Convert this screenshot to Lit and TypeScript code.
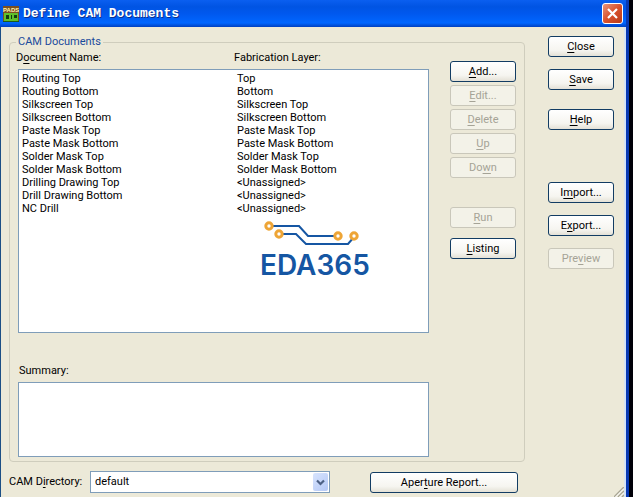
import { LitElement, html, css, svg } from "lit";
import { customElement, property } from "lit/decorators.js";

const documents: [string, string][] = [
  ["Routing Top", "Top"],
  ["Routing Bottom", "Bottom"],
  ["Silkscreen Top", "Silkscreen Top"],
  ["Silkscreen Bottom", "Silkscreen Bottom"],
  ["Paste Mask Top", "Paste Mask Top"],
  ["Paste Mask Bottom", "Paste Mask Bottom"],
  ["Solder Mask Top", "Solder Mask Top"],
  ["Solder Mask Bottom", "Solder Mask Bottom"],
  ["Drilling Drawing Top", "<Unassigned>"],
  ["Drill Drawing Bottom", "<Unassigned>"],
  ["NC Drill", "<Unassigned>"],
];

// Splits a caption such as "Do&wn" and underlines the letter after the ampersand.
const caption = (text: string) => {
  const at = text.indexOf("&");
  if (at < 0) return html`${text}`;
  return html`${text.slice(0, at)}<u>${text[at + 1]}</u>${text.slice(at + 2)}`;
};

@customElement("push-button")
export class PushButton extends LitElement {
  @property() label = "";
  @property({ type: Boolean }) disabled = false;

  static styles = css`
    :host {
      display: block;
    }
    .button {
      display: block;
      box-sizing: border-box;
      width: 100%;
      height: 21px;
      padding: 0;
      border: 1px solid #123c63;
      border-radius: 3px;
      background: linear-gradient(#ffffff, #f6f5f0 70%, #e4e1d6);
      color: #000;
      font: inherit;
      line-height: 19px;
      text-align: center;
      white-space: nowrap;
    }
    .button:disabled {
      border-color: #c9c7ba;
      background: #f3f2e8;
      color: #a5a396;
    }
    u {
      text-underline-offset: 2px;
      text-decoration-skip-ink: none;
    }
  `;

  render() {
    return html`<button class="button" type="button" ?disabled=${this.disabled}>${caption(this.label)}</button>`;
  }
}

@customElement("app-root")
export class AppRoot extends LitElement {
  static styles = css`
    :host {
      display: flex;
      box-sizing: border-box;
      min-height: 100vh;
      padding-right: 4px;
      background: #000008;
      color: #000;
      font: 11px/14px Roboto, "Liberation Sans", sans-serif;
    }
    .window {
      flex: 1;
      display: flex;
      flex-direction: column;
      border-right: 3px solid #0839b4;
      overflow: hidden;
    }
    .titlebar {
      display: flex;
      align-items: center;
      gap: 4px;
      box-sizing: border-box;
      height: 27px;
      padding: 0 3px;
      background: linear-gradient(#0a5ff0, #0054e3 25%, #0058ee 50%, #0066ff 85%, #0040c0);
    }
    .title {
      flex: 1;
      margin: 0;
      color: #fff;
      font: bold 13px/16px "Liberation Mono", monospace;
      text-shadow: 1px 1px #0b2f8c;
    }
    .close {
      width: 21px;
      height: 21px;
      padding: 0;
      border: 1px solid #fff;
      border-radius: 3px;
      background: linear-gradient(135deg, #e8957c, #d9512c 50%, #b93a17);
    }
    .close svg,
    .logo svg,
    .grip svg,
    .app-icon {
      display: block;
    }
    .close svg {
      margin: auto;
    }
    .body {
      position: relative;
      flex: 1;
      padding: 9px 10px 4px 8px;
      border-left: 1px solid #1c4f85;
      border-right: 2px solid #d5e3f5;
      background: #ece9d8;
    }
    .columns {
      display: flex;
      gap: 23px;
    }
    .group {
      flex: 1;
      display: flex;
      gap: 21px;
      min-width: 0;
      margin: 0;
      padding: 3px 8px 4px;
      border: 1px solid #cfcdbd;
      border-radius: 4px;
    }
    .legend {
      margin-left: -2px;
      padding: 0 2px;
      line-height: 12px;
      color: #1a4a9c;
    }
    .main {
      flex: 1;
      min-width: 0;
    }
    .headings {
      display: grid;
      grid-template-columns: 218px 1fr;
      margin: 0 -2px 4px;
    }
    .listbox {
      box-sizing: border-box;
      min-height: 264px;
      padding: 2px 3px;
      border: 1px solid #7f9db9;
      background: #fff;
    }
    .documents {
      width: 100%;
      border-collapse: collapse;
      table-layout: fixed;
    }
    .documents td {
      padding: 0;
      line-height: 13px;
    }
    .name {
      width: 215px;
    }
    .logo {
      width: 112px;
      margin: 6px 0 0 238px;
      color: #1556a3;
      font: 600 28px/32px Inter, sans-serif;
    }
    .summary-label {
      display: block;
      margin: 31px 0 4px 1px;
    }
    .summary {
      display: block;
      box-sizing: border-box;
      width: 100%;
      height: 75px;
      border: 1px solid #7f9db9;
      background: #fff;
      resize: none;
      font: inherit;
    }
    .actions {
      display: flex;
      flex-direction: column;
      gap: 3px;
      width: 66px;
      padding-top: 10px;
    }
    .actions .spaced {
      margin-top: 26px;
    }
    .actions .apart {
      margin-top: 7px;
    }
    .commands {
      display: flex;
      flex-direction: column;
      gap: 12px;
      width: 66px;
    }
    .commands .spaced {
      margin-top: 7px;
    }
    .commands .far {
      margin-top: 40px;
    }
    .footer {
      display: flex;
      align-items: center;
      margin-top: 9px;
    }
    .directory-label {
      width: 81px;
    }
    .combo {
      position: relative;
      width: 240px;
      margin-right: 40px;
    }
    .directory {
      display: block;
      box-sizing: border-box;
      width: 100%;
      height: 22px;
      padding: 0 4px;
      border: 1px solid #7f9db9;
      border-radius: 0;
      background: #fff;
      color: #000;
      font: inherit;
      appearance: none;
    }
    .arrow {
      position: absolute;
      top: 2px;
      right: 2px;
      display: grid;
      place-items: center;
      width: 15px;
      height: 18px;
      border-radius: 2px;
      background: linear-gradient(135deg, #d8e4fd, #b4c8f6);
      pointer-events: none;
    }
    .report {
      width: 148px;
    }
    .grip {
      position: absolute;
      right: 0;
      bottom: 0;
    }
    u {
      text-underline-offset: 2px;
      text-decoration-skip-ink: none;
    }
  `;

  private logoTraces() {
    const pads = [[9, 5], [19, 13], [78, 15], [94, 15]];
    return svg`
      <path d="M9 5H39L48 15H78M19 13H36L46 23H88L94 16" fill="none" stroke="#1556a3" stroke-width="2" />
      ${pads.map(([x, y]) => svg`<circle cx=${x} cy=${y} r="3.200" fill="#fff" stroke="#eea536" stroke-width="3" />`)}
    `;
  }

  render() {
    return html`
      <div class="window">
        <header class="titlebar">
          <svg class="app-icon" width="16" height="18" viewBox="0 0 16 18" aria-hidden="true">
            <rect y="1" width="16" height="16" fill="#7a4f22" />
            <text x="0" y="7" font-family="Liberation Sans" font-size="6" font-weight="bold" fill="#fff3b0">PADS</text>
            <rect x="1" y="8" width="14" height="8" fill="#5fc02c" />
            <path d="M3 10h3v4H3zM8 10h1v4H8zM11 10h3v3h-3z" fill="#123c12" />
            <path d="M0 16.500h16" stroke="#1d5a1a" />
          </svg>
          <h1 class="title">Define CAM Documents</h1>
          <button class="close" type="button" aria-label="Close window">
            <svg width="13" height="13" viewBox="0 0 13 13"><path d="M2 2L11 11M11 2L2 11" stroke="#fff" stroke-width="2.200" /></svg>
          </button>
        </header>
        <main class="body">
          <div class="columns">
            <fieldset class="group">
              <legend class="legend">CAM Documents</legend>
              <div class="main">
                <div class="headings">
                  <span id="names">${caption("D&ocument Name:")}</span>
                  <span>Fabrication Layer:</span>
                </div>
                <div class="listbox">
                  <table class="documents" aria-labelledby="names">
                    <tbody>
                      ${documents.map(([name, layer]) => html`<tr><td class="name">${name}</td><td>${layer}</td></tr>`)}
                    </tbody>
                  </table>
                  <div class="logo">
                    <svg width="112" height="28" viewBox="0 0 112 28" aria-hidden="true">${this.logoTraces()}</svg>
                    EDA365
                  </div>
                </div>
                <label class="summary-label" for="summary">Summary:</label>
                <textarea class="summary" id="summary" readonly></textarea>
              </div>
              <div class="actions">
                <push-button label="&Add..."></push-button>
                <push-button label="&Edit..." disabled></push-button>
                <push-button label="&Delete" disabled></push-button>
                <push-button label="&Up" disabled></push-button>
                <push-button label="Do&wn" disabled></push-button>
                <push-button class="spaced" label="&Run" disabled></push-button>
                <push-button class="apart" label="&Listing"></push-button>
              </div>
            </fieldset>
            <nav class="commands">
              <push-button label="&Close"></push-button>
              <push-button label="&Save"></push-button>
              <push-button class="spaced" label="&Help"></push-button>
              <push-button class="far" label="I&mport..."></push-button>
              <push-button label="E&xport..."></push-button>
              <push-button label="Pre&view" disabled></push-button>
            </nav>
          </div>
          <div class="footer">
            <label class="directory-label" for="directory">${caption("CAM D&irectory:")}</label>
            <div class="combo">
              <select class="directory" id="directory"><option>default</option></select>
              <span class="arrow"><svg width="9" height="7" viewBox="0 0 9 7"><path d="M1 1.500L4.500 5L8 1.500" fill="none" stroke="#4d6185" stroke-width="2.200" /></svg></span>
            </div>
            <push-button class="report" label="Aper&ture Report..."></push-button>
          </div>
          <div class="grip">
            <svg width="10" height="10" viewBox="0 0 10 10" aria-hidden="true">
              <path d="M0 10L10 0M4 10L10 4M8 10L10 8" stroke="#a8a593" stroke-width="1.500" />
              <path d="M1.500 10L10 1.500M5.500 10L10 5.500" stroke="#fff" />
            </svg>
          </div>
        </main>
      </div>
    `;
  }
}
